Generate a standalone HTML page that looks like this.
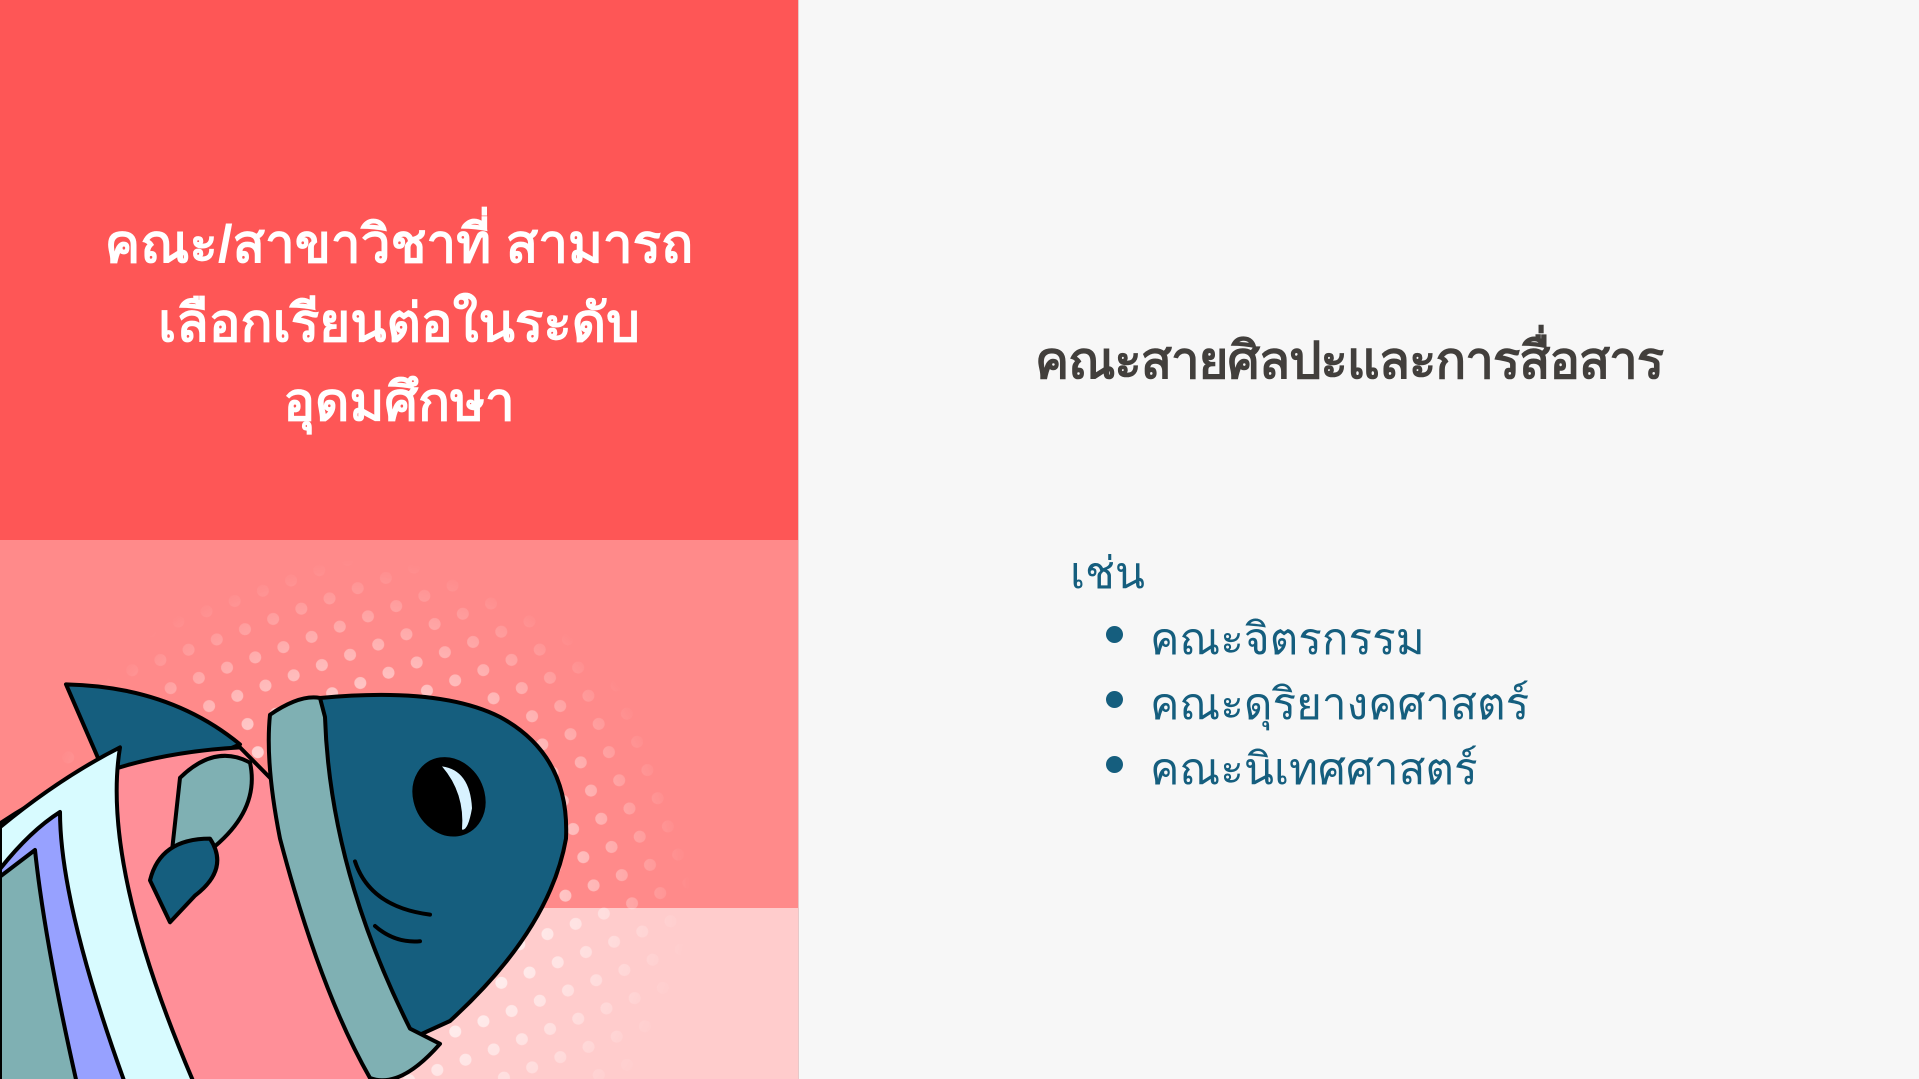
<!DOCTYPE html>
<html><head><meta charset="utf-8"><style>
html,body{margin:0;padding:0;width:1919px;height:1079px;overflow:hidden;background:#f7f7f7;font-family:"Liberation Sans","DejaVu Sans",sans-serif;}
.left{position:absolute;left:0;top:0;width:798px;height:1079px;overflow:hidden;}
.red{position:absolute;left:0;top:0;width:798px;height:540px;background:#fe5656;}
.title{position:absolute;left:40px;width:718px;top:205px;text-align:center;color:#fff;font-weight:bold;font-size:53px;line-height:79px;}
.h{position:absolute;left:1035px;top:320px;width:640px;font-size:51px;font-weight:bold;color:#423f3c;white-space:nowrap;letter-spacing:-1px;}
.sub{position:absolute;left:1070px;top:538px;font-size:44px;color:#155e7e;}
.item{position:absolute;left:1150px;font-size:44px;color:#155e7e;white-space:nowrap;}
.dot{position:absolute;left:1106px;width:17px;height:17px;border-radius:50%;background:#155e7e;}
</style></head><body>
<div class="left">
<svg width="798" height="1079" style="position:absolute;left:0;top:0">
<defs>
<pattern id="p" width="30" height="30" patternUnits="userSpaceOnUse" patternTransform="rotate(-20)"><circle cx="15" cy="15" r="6" fill="#fff"/></pattern>
<radialGradient id="g" cx="360" cy="890" r="330" gradientUnits="userSpaceOnUse"><stop offset="0.3" stop-color="#fff"/><stop offset="0.75" stop-color="#666"/><stop offset="1" stop-color="#000"/></radialGradient>
<mask id="m"><rect width="798" height="1079" fill="url(#g)"/></mask>
</defs>
<rect x="0" y="540" width="798" height="368" fill="#ff8a8a"/>
<rect x="0" y="908" width="798" height="171" fill="#ffcccc"/>
<rect x="0" y="560" width="798" height="519" fill="url(#p)" mask="url(#m)" opacity="0.85"/>
<g transform="translate(0,109) scale(1,0.76)">
<g stroke="#000" stroke-width="4" stroke-linejoin="round" stroke-linecap="round">
<path vector-effect="non-scaling-stroke" d="M66,757 Q170,760 240,836 L180,870 Q150,900 122,933 L112,870 Q100,860 102,866 Z" fill="#155e7e"/>
<path vector-effect="non-scaling-stroke" d="M0,940 Q100,850 240,840 L330,960 L390,1300 L0,1300 Z" fill="#ff8f98"/>
<path vector-effect="non-scaling-stroke" d="M0,945 Q60,880 120,840 Q100,1000 200,1300 L0,1300 Z" fill="#d8fbff"/>
<path vector-effect="non-scaling-stroke" d="M0,1000 Q30,950 60,925 Q60,1050 130,1300 L0,1300 Z" fill="#97a1ff"/>
<path vector-effect="non-scaling-stroke" d="M0,1010 L35,975 Q45,1100 80,1300 L0,1300 Z" fill="#7fb0b3"/>
<path vector-effect="non-scaling-stroke" d="M320,775 Q440,760 500,800 Q570,850 566,960 Q550,1080 450,1200 L400,1230 Q330,1100 316,950 Z" fill="#155e7e"/>
<path vector-effect="non-scaling-stroke" d="M270,797 Q300,770 320,775 L325,800 Q330,1000 410,1210 L440,1230 Q400,1290 370,1275 Q320,1160 280,960 Q265,860 270,797 Z" fill="#7fb0b3"/>
<path vector-effect="non-scaling-stroke" d="M180,880 Q215,835 250,860 Q260,920 215,970 Q160,1030 170,1000 Z" fill="#7fb0b3"/>
<path vector-effect="non-scaling-stroke" d="M150,1015 Q160,960 210,960 Q230,1000 195,1035 L170,1070 Z" fill="#155e7e"/>
<ellipse vector-effect="non-scaling-stroke" cx="449" cy="905" rx="34" ry="50" fill="#000" transform="rotate(-10 449 905)"/>
<path vector-effect="non-scaling-stroke" d="M355,990 Q370,1050 430,1060" fill="none"/>
<path vector-effect="non-scaling-stroke" d="M375,1075 Q395,1098 420,1095" fill="none"/>
</g>
<path d="M442,865 Q470,870 472,920 Q468,950 462,948 Q465,900 442,865 Z" fill="#d8f2ff"/>
</g>
</svg>
<div class="red"></div>
<div class="title">คณะ/สาขาวิชาที่ สามารถ<br>เลือกเรียนต่อในระดับ<br>อุดมศึกษา</div>
</div>
<div style="position:absolute;left:798px;top:0;width:1px;height:1079px;background:#e6c9c9"></div>
<div class="h">คณะสายศิลปะและการสื่อสาร</div>
<div class="sub">เช่น</div>
<div class="dot" style="top:626px"></div><div class="item" style="top:604px">คณะจิตรกรรม</div>
<div class="dot" style="top:691px"></div><div class="item" style="top:669px">คณะดุริยางคศาสตร์</div>
<div class="dot" style="top:756px"></div><div class="item" style="top:734px">คณะนิเทศศาสตร์</div>
</body></html>
